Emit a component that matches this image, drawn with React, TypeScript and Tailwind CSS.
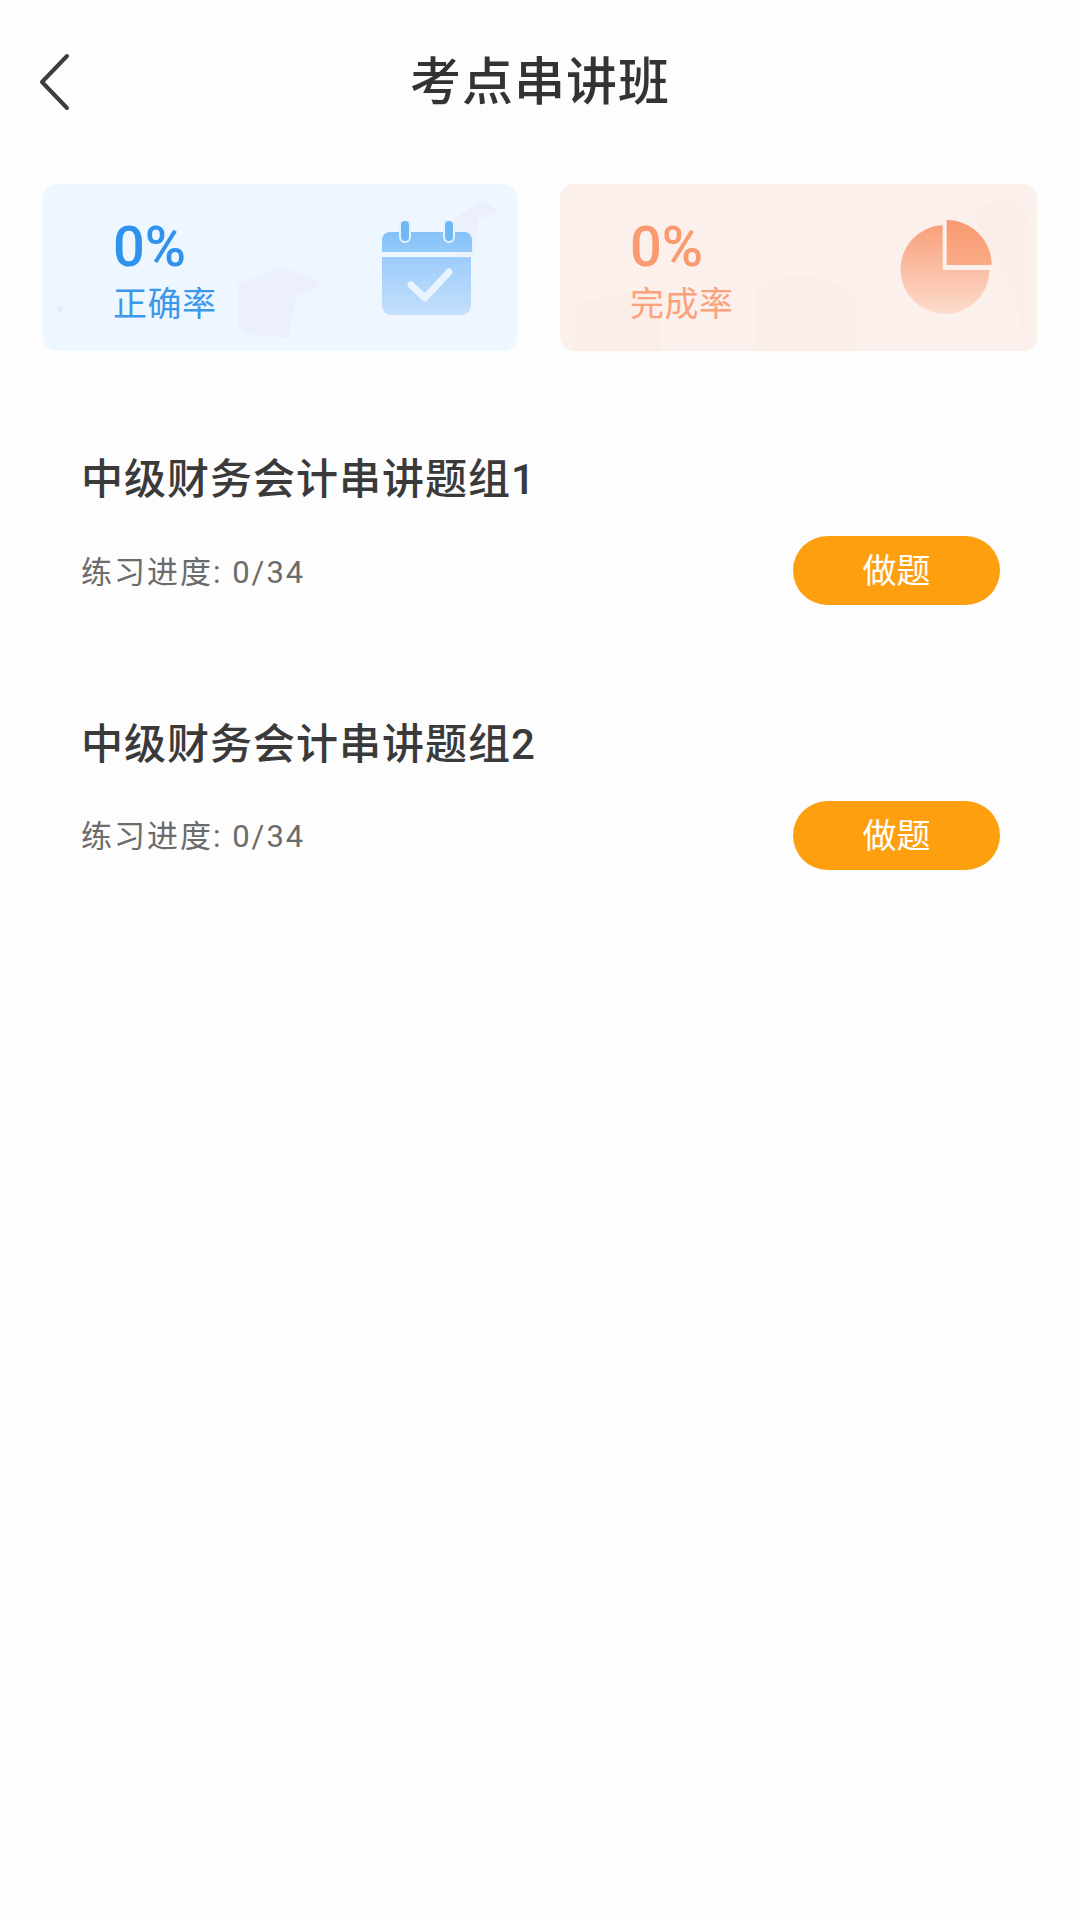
import React from "react";

const font = { fontFamily: '"Roboto", "Noto Sans CJK SC", sans-serif' };

const CalendarIcon = () => (
  <svg width="90" height="96" viewBox="0 0 90 96" className="block">
    <defs>
      <linearGradient id="calTop" x1="0" y1="0" x2="0" y2="1">
        <stop offset="0" stopColor="#84c2f8" />
        <stop offset="1" stopColor="#95c9fb" />
      </linearGradient>
      <linearGradient id="calBody" x1="0" y1="0" x2="0" y2="1">
        <stop offset="0" stopColor="#9dcdfc" />
        <stop offset="1" stopColor="#c4dffb" />
      </linearGradient>
    </defs>
    <path d="M0 32V20a8 8 0 0 1 8-8h74a8 8 0 0 1 8 8v12z" fill="url(#calTop)" />
    <path d="M0 37h89v49a9 9 0 0 1-9 9H9a9 9 0 0 1-9-9z" fill="url(#calBody)" />
    <rect x="18" y="0" width="10" height="22" rx="5" fill="#6fb8f4" stroke="#e4f1fe" strokeWidth="2" />
    <rect x="62" y="0" width="10" height="22" rx="5" fill="#6fb8f4" stroke="#e4f1fe" strokeWidth="2" />
    <path d="M29 65l14 13 24-26" fill="none" stroke="#eaf4ff" strokeWidth="7" strokeLinecap="round" strokeLinejoin="round" />
  </svg>
);

const PieIcon = () => (
  <svg width="94" height="95" viewBox="0 0 94 95" className="block">
    <defs>
      <linearGradient id="pieFill" x1="0" y1="0" x2="0" y2="1">
        <stop offset="0" stopColor="#f8a07a" />
        <stop offset="1" stopColor="#fddccd" />
      </linearGradient>
      <linearGradient id="pieSmall" x1="0" y1="0" x2="0" y2="1">
        <stop offset="0" stopColor="#f79a70" />
        <stop offset="1" stopColor="#fbab87" />
      </linearGradient>
    </defs>
    <path d="M42.700 5V50H89.500A44.500 44.500 0 1 1 42.700 5z" fill="url(#pieFill)" />
    <path d="M46.700 0A45 45 0 0 1 91.700 45H46.700z" fill="url(#pieSmall)" />
  </svg>
);

const BlueDecor = () => (
  <svg width="474" height="167" viewBox="0 0 474 167" className="absolute inset-0">
    <path d="M195 100l45-17 41 16-28 14-8 41-42-4-8-8z" fill="#ebeef9" opacity="0.7" />
    <path d="M412 34l27-18 18 12-22 7-4 36-19 2z" fill="#ebeef9" opacity="0.7" />
    <circle cx="17" cy="125" r="3" fill="#e6ecf8" />
  </svg>
);

const OrangeDecor = () => (
  <svg width="477" height="167" viewBox="0 0 477 167" className="absolute inset-0">
    <path d="M14 120l60-13 26 20v40H14z" fill="#fbeee9" />
    <path d="M195 105q45-30 100 5v57H195z" fill="#fbeee8" />
    <path d="M414 30q20-20 45-12l11 20v110l-8 0-6-30-32-60z" fill="#fbeee8" />
  </svg>
);

interface IStatProps {
  value: string;
  label: string;
  color: string;
  labelColor: string;
  bg: string;
  width: string;
  decor: React.ReactNode;
  icon: React.ReactNode;
  iconClass: string;
}

const StatCard = ({ value, label, color, labelColor, bg, width, decor, icon, iconClass }: IStatProps) => (
  <div className={`relative h-[167px] overflow-hidden rounded-[14px] ${width} ${bg}`}>
    {decor}
    <div className="relative flex h-full items-start justify-between pl-[70px]">
      <div className="flex flex-col">
        <span className={`mt-[33px] text-[56px] leading-[60px] font-medium ${color}`}>{value}</span>
        <span className={`mt-[7px] text-[34px] leading-[40px] tracking-[0.500px] ${labelColor}`}>{label}</span>
      </div>
      <div className={iconClass}>{icon}</div>
    </div>
  </div>
);

const GroupRow = ({ title }: { title: string }) => (
  <div className="h-[264.500px] pt-[106px] pr-[80px] pl-[81px]">
    <div className="text-[42px] leading-[48px] font-medium tracking-[1px] text-[#3a3a3a]">{title}</div>
    <div className="mt-[32px] flex items-center justify-between">
      <span className="pt-[4px] text-[31px] leading-[40px] tracking-[2px] text-[#6b6b6b]">练习进度: 0/34</span>
      <button className="h-[69px] w-[207px] rounded-full bg-[#fe9f10] pt-[2px] text-[34px] text-white">做题</button>
    </div>
  </div>
);

export default function App() {
  return (
    <div className="h-[1920px] w-[1080px] overflow-hidden bg-[#fdfdfe]" style={font}>
      <div className="relative flex h-[164px] items-center justify-center pt-[2px]">
        <svg width="34" height="60" viewBox="0 0 34 60" className="absolute top-[52px] left-[38px]">
          <path d="M29 4L4 30l25 26" fill="none" stroke="#3d3d3d" strokeWidth="4" strokeLinecap="round" strokeLinejoin="round" />
        </svg>
        <h1 className="text-[51px] font-medium tracking-[1px] text-[#333333]">考点串讲班</h1>
      </div>
      <div className="mt-[20px] flex justify-between pr-[43px] pl-[43px]">
        <StatCard
          value="0%"
          label="正确率"
          color="text-[#2f93ee]"
          labelColor="text-[#3b98ea]"
          bg="bg-[#eef6ff]"
          width="w-[474px]"
          decor={<BlueDecor />}
          icon={<CalendarIcon />}
          iconClass="mt-[36px] mr-[45px]"
        />
        <StatCard
          value="0%"
          label="完成率"
          color="text-[#f99a70]"
          labelColor="text-[#fba27c]"
          bg="bg-[#fcf0ed]"
          width="w-[477px]"
          decor={<OrangeDecor />}
          icon={<PieIcon />}
          iconClass="mt-[36px] mr-[43px]"
        />
      </div>
      <div className="mt-[-1px]">
        <GroupRow title="中级财务会计串讲题组1" />
        <GroupRow title="中级财务会计串讲题组2" />
      </div>
    </div>
  );
}
